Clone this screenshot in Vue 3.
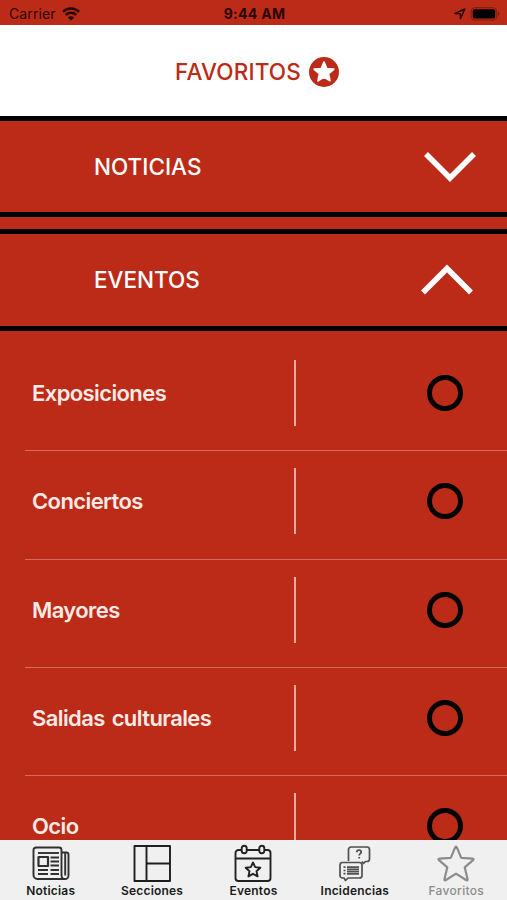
<script setup>
const rows = ['Exposiciones', 'Conciertos', 'Mayores', 'Salidas culturales', 'Ocio']
</script>

<template>
  <div class="screen">
    <div class="status">
      <div class="carrier">
        <span class="carrier-name">Carrier</span>
        <svg width="18" height="14" viewBox="0 0 18 14" fill="none" stroke="#280500" stroke-width="2.5">
          <path d="M1 4.800a11.400 11.400 0 0 1 16 0" />
          <path d="M3.800 8a7.400 7.400 0 0 1 10.400 0" />
          <path d="M9 13.600 5.800 10.500a4.500 4.500 0 0 1 6.400 0Z" fill="#280500" stroke="none" />
        </svg>
      </div>
      <span class="time">9:44 AM</span>
      <div class="power">
        <svg width="12" height="12" viewBox="0 0 12 12" fill="none" stroke="#280500" stroke-width="1.500" stroke-linejoin="round">
          <path d="M1 5.500 10.800 1 6.500 10.800 6.200 5.800Z" />
        </svg>
        <svg width="30" height="14" viewBox="0 0 30 14">
          <rect x="1.200" y=".7" width="25.500" height="12.300" rx="3.500" fill="none" stroke="#7c1b0e" stroke-width="1" />
          <rect x="2.700" y="2.200" width="22.500" height="9.300" rx="2" fill="#000" />
          <path d="M28 4.600q1.400.6 1.400 2.200T28 9Z" fill="#7c1b0e" />
        </svg>
      </div>
    </div>

    <header class="header">
      <h1>FAVORITOS</h1>
      <svg width="30" height="30" viewBox="0 0 30 30">
        <circle cx="15" cy="15" r="15" fill="#bc2b17" />
        <path d="m15 5.200 2.700 6.400 7 .6-5.300 4.600 1.600 6.900-6-3.700-6 3.700 1.600-6.900-5.300-4.600 7-.6Z" fill="#fff" stroke="#fff" stroke-width="1.800" stroke-linejoin="round" />
      </svg>
    </header>

    <main class="content">
      <section class="group">
        <h2>NOTICIAS</h2>
        <svg class="chevron" width="54" height="32" viewBox="0 0 54 32"><path d="M3 3 27 27 51 3" /></svg>
      </section>
      <section class="group open">
        <h2>EVENTOS</h2>
        <svg class="chevron" width="54" height="32" viewBox="0 0 54 32"><path d="M3 28.500 27 4.500 51 28.500" /></svg>
      </section>
      <ul class="list">
        <li v-for="row in rows" :key="row" class="row">
          <span class="label">{{ row }}</span>
          <span class="rule"></span>
          <span class="radio"></span>
        </li>
      </ul>
    </main>

    <nav class="tabs">
      <a class="tab">
        <svg width="40" height="40" viewBox="0 0 40 40" fill="none" stroke="#303030" stroke-width="1.900" stroke-linejoin="round">
          <path d="M32.500 35H6.500a4 4 0 0 1-4-4V6a2.500 2.500 0 0 1 2.500-2.500h23A2.500 2.500 0 0 1 30.500 6v25.500a3.500 3.500 0 0 0 7 0V10.500a2 2 0 0 0-2-2h-5M34.200 9v22.500" />
          <path d="M7 9h21" />
          <rect x="7.500" y="13" width="9.500" height="9" stroke-width="2.200" />
          <path d="M19.500 13.500H28M19.500 17.500H28M19.500 21.500H28M7 26h10M7 30h10M19.500 26H28M19.500 30H28" />
        </svg>
        <span>Noticias</span>
      </a>
      <a class="tab">
        <svg width="40" height="40" viewBox="0 0 40 40" fill="none" stroke="#1e1e1e" stroke-width="1.900" stroke-linejoin="round">
          <path d="M2.500 2h35.500v35H2.500ZM14.500 2v35M14.500 19.500H38" />
        </svg>
        <span>Secciones</span>
      </a>
      <a class="tab">
        <svg width="40" height="40" viewBox="0 0 40 40" fill="none" stroke="#222" stroke-width="1.900" stroke-linejoin="round">
          <path d="M8.500 6H5.500a3 3 0 0 0-3 3v25a3 3 0 0 0 3 3h29a3 3 0 0 0 3-3V9a3 3 0 0 0-3-3h-3M14 6h12M2.500 14.500h35" />
          <rect x="8.700" y="1.700" width="5" height="7.500" rx="2.500" />
          <rect x="26.300" y="1.700" width="5" height="7.500" rx="2.500" />
          <path d="m20 18.500 2.200 4.600 5.100.6-3.800 3.500 1.100 5.200-4.600-2.600-4.600 2.600 1.100-5.200-3.800-3.500 5.100-.6Z" />
        </svg>
        <span>Eventos</span>
      </a>
      <a class="tab">
        <svg width="40" height="40" viewBox="0 0 40 40" fill="none" stroke="#505050" stroke-width="1.700" stroke-linejoin="round">
          <path d="M13.500 17V5.500A2.500 2.500 0 0 1 16 3h16a2.500 2.500 0 0 1 2.500 2.500V15a2.500 2.500 0 0 1-2.500 2.500h-1.500l-2 2-1.500-2" />
          <path d="M7.500 18.500h17a2.500 2.500 0 0 1 2.500 2.500v10.500a2.500 2.500 0 0 1-2.500 2.500H13l-2.500 2.500L9 34H7.500A2.500 2.500 0 0 1 5 31.500V21a2.500 2.500 0 0 1 2.500-2.500Z" />
          <path d="M8.500 23.200h2M8.500 26.500h2M8.500 29.700h2M12 23.200h12M12 25.400h12M12 27.600h12M12 29.800h12" />
          <path d="M21.800 8.200c0-2.700 4.400-2.700 4.400 0 0 1.500-2 1.400-2 3.300M24.200 13v1.500" stroke-width="1.800" />
        </svg>
        <span>Incidencias</span>
      </a>
      <a class="tab muted">
        <svg width="40" height="40" viewBox="0 0 40 40" fill="none" stroke="#8c8c8c" stroke-width="2.200" stroke-linejoin="round">
          <path d="M19.100 3.400q.9-1.800 1.800 0l4 9.800q.2.600.8.700l10.800.7q2 .2.500 1.600l-8.300 7.100 2.800 11.700q.2 2-1.500 1L20 29.600l-10 6.400q-1.700 1-1.500-1l2.800-11.700L3 16.200q-1.500-1.400.5-1.600l10.800-.7q.6-.1.800-.7Z" />
        </svg>
        <span>Favoritos</span>
      </a>
    </nav>
  </div>
</template>

<style>
body {
  background: #bc2b17;
}
</style>

<style scoped>
.screen {
  display: flex;
  flex-direction: column;
  width: 507px;
  height: 900px;
  overflow: hidden;
  background: #bc2b17;
  color: #fff;
  font-family: Inter, "Liberation Sans", sans-serif;
}
svg {
  display: block;
  flex: none;
}
.status {
  flex: none;
  display: grid;
  grid-template-columns: 1fr auto 1fr;
  align-items: center;
  box-sizing: border-box;
  height: 25px;
  padding: 2px 7px 0 9px;
  color: #280500;
  font-size: 14px;
}
.carrier {
  display: flex;
  align-items: center;
  gap: 6px;
}
.carrier-name {
  letter-spacing: 0.1px;
}
.time {
  font-weight: 700;
  letter-spacing: 0.3px;
}
.power {
  display: flex;
  justify-content: flex-end;
  align-items: center;
  gap: 4px;
}
.header {
  flex: none;
  display: flex;
  align-items: center;
  justify-content: center;
  gap: 8px;
  box-sizing: border-box;
  height: 91px;
  padding-top: 3px;
  padding-left: 7px;
  background: #fff;
  color: #bc2b17;
}
h1,
h2 {
  margin: 0;
  font-size: 22.500px;
  line-height: 30px;
  font-weight: 550;
}
h1 {
  letter-spacing: 0.15px;
}
h2 {
  letter-spacing: 0;
}
.content {
  flex: 1;
  min-height: 0;
  overflow: hidden;
}
.group {
  display: flex;
  align-items: center;
  justify-content: space-between;
  box-sizing: border-box;
  height: 101px;
  padding: 0 30px 0 94px;
  border-top: 5px solid #000;
  border-bottom: 5px solid #000;
}
.group.open {
  height: 102px;
  margin-top: 12px;
  padding-right: 33px;
}
.chevron {
  fill: none;
  stroke: #fff;
  stroke-width: 5.500;
}
.list {
  margin: 0;
  padding: 12px 0 0 25px;
  list-style: none;
}
.row {
  display: grid;
  grid-template-columns: 262px 2px 36px;
  align-items: center;
  box-sizing: border-box;
  height: 108.330px;
  padding: 17px 0 24px 7px;
  border-bottom: 1px solid #d56d5e;
}
.label {
  font-size: 22px;
  font-weight: 600;
  letter-spacing: -0.6px;
  word-spacing: 2px;
  color: #fdeae5;
}
.rule {
  height: 66px;
  background: #e9aaa0;
}
.radio {
  box-sizing: border-box;
  width: 36px;
  height: 36px;
  margin-left: 131px;
  border: 5px solid #000;
  border-radius: 50%;
}
.tabs {
  flex: none;
  display: grid;
  grid-template-columns: repeat(5, 1fr);
  height: 60px;
  background: #f0f0f0;
  color: #1a1a1a;
}
.tab {
  display: flex;
  flex-direction: column;
  align-items: center;
  padding-top: 4px;
  font-size: 12px;
  line-height: 14px;
  font-weight: 600;
  letter-spacing: 0.2px;
}
.muted {
  color: #8c8c8c;
  font-weight: 500;
  letter-spacing: 0.3px;
}
</style>
